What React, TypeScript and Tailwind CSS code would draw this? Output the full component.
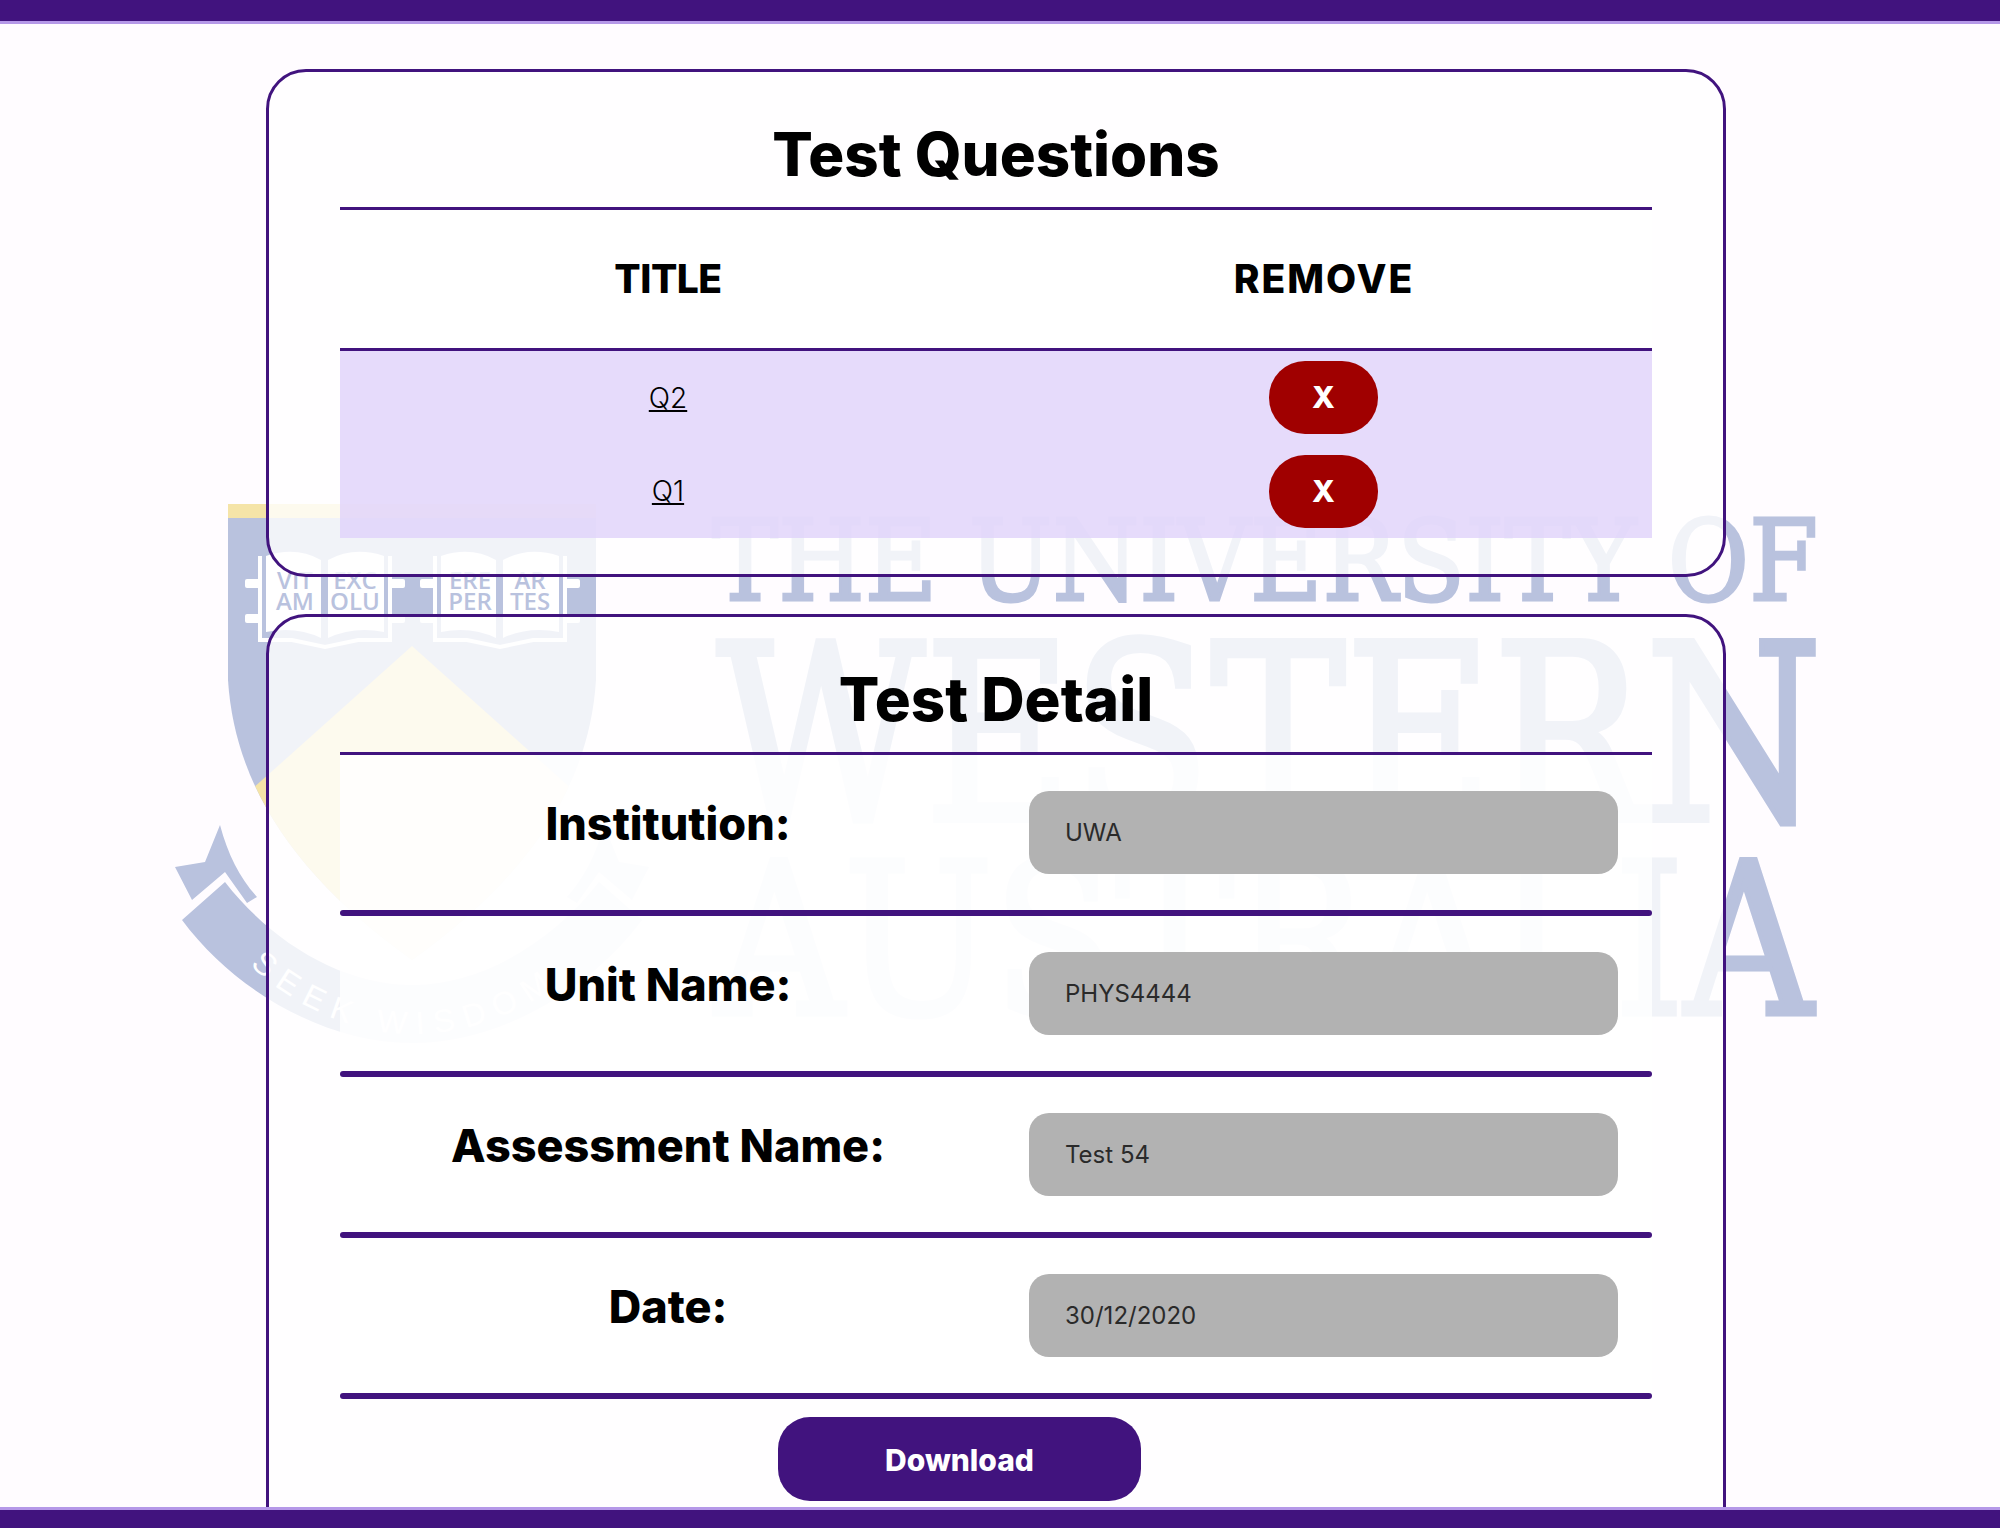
import React from "react";

const blue = "#b9c2de";
const gold = "#f5e4a8";

function Book({ x, l1, l2 }: { x: number; l1: [string, string]; l2: [string, string] }) {
  return (
    <g>
      <path
        d={`M${x + 2} 556 V640 H${x + 34} L${x + 67} 647 L${x + 100} 640 H${x + 132} V556`}
        fill="none"
        stroke="#fff"
        strokeWidth="4"
      />
      <g fill="#fff">
        <rect x={x - 13} y={579} width={15} height={9} rx={2} />
        <rect x={x - 13} y={614} width={15} height={9} rx={2} />
        <rect x={x + 132} y={579} width={15} height={9} rx={2} />
        <rect x={x + 132} y={614} width={15} height={9} rx={2} />
      </g>
      <path d={`M${x + 8} 632 V556 Q${x + 38} 546 ${x + 63} 560 V638 Q${x + 38} 626 ${x + 8} 632 Z`} fill="#fff" />
      <path d={`M${x + 70} 638 V560 Q${x + 96} 546 ${x + 126} 556 V632 Q${x + 96} 626 ${x + 70} 638 Z`} fill="#fff" />
      <g fill={blue} fontFamily="'Open Sans',sans-serif" fontWeight="600" fontSize="24" textAnchor="middle">
        <text x={x + 37} y={589}>{l1[0]}</text>
        <text x={x + 37} y={610}>{l1[1]}</text>
        <text x={x + 97} y={589}>{l2[0]}</text>
        <text x={x + 97} y={610}>{l2[1]}</text>
      </g>
    </g>
  );
}

function Watermark() {
  return (
    <svg className="absolute inset-0" width="2000" height="1528" viewBox="0 0 2000 1528" aria-hidden="true">
      <defs>
        <clipPath id="shield">
          <path d="M228 504H596V680C589 790 524 880 412 960C300 880 235 790 228 680Z" />
        </clipPath>
        <path id="motto" d="M250 965C300 1012 360 1034 412 1034C470 1034 530 1012 580 965" />
      </defs>
      <g clipPath="url(#shield)">
        <rect x="228" y="504" width="368" height="480" fill={blue} />
        <rect x="228" y="504" width="368" height="14" fill={gold} />
        <path d="M412 646L640 850L412 1010L184 850Z" fill={gold} />
      </g>
      <Book x={258} l1={["VIT", "AM"]} l2={["EXC", "OLU"]} />
      <Book x={433} l1={["ERE", "PER"]} l2={["AR", "TES"]} />
      <path d="M175 867L205 862L220 825C228 855 240 878 257 897L247 903L225 872L192 900Z" fill={blue} />
      <path d="M649 867L619 862L604 825C596 855 584 878 567 897L577 903L599 872L632 900Z" fill={blue} />
      <path
        d="M182 920L225 882C270 940 340 985 412 985C484 985 554 940 599 882L642 920C590 990 500 1043 412 1043C324 1043 234 990 182 920Z"
        fill={blue}
      />
      <text fill="#fff" fontFamily="'Liberation Sans',sans-serif" fontSize="32" letterSpacing="10">
        <textPath href="#motto">SEEK WISDOM</textPath>
      </text>
      <g fill={blue} stroke={blue} fontFamily="'DejaVu Serif',serif">
        <text x="712" y="600" fontSize="113" strokeWidth="3" textLength="1106" lengthAdjust="spacingAndGlyphs">THE UNIVERSITY OF</text>
        <text x="717" y="820" fontSize="245" strokeWidth="6" textLength="1105" lengthAdjust="spacingAndGlyphs">WESTERN</text>
        <text x="715" y="1014" fontSize="212" strokeWidth="5" textLength="1098" lengthAdjust="spacingAndGlyphs">AUSTRALIA</text>
      </g>
    </svg>
  );
}

function RemoveRow({ title }: { title: string }) {
  return (
    <div className="grid grid-cols-2 h-[93.5px] items-center bg-[#e0d2fa]/80">
      <a className="justify-self-center text-[28px] font-light underline text-black">{title}</a>
      <button className="justify-self-start ml-[273px] w-[109px] h-[73px] rounded-[36px] bg-[#a00000] text-white text-[30px] font-extrabold">
        X
      </button>
    </div>
  );
}

function DetailRow({ label, value }: { label: string; value: string }) {
  return (
    <>
      <div className="grid grid-cols-2 h-[155px] items-center bg-white/80">
        <div className="text-center text-[45px] font-extrabold text-black pb-[18px]">{label}</div>
        <div className="justify-self-start ml-[33px] w-[589px] h-[83px] rounded-[20px] bg-[#b2b2b2] flex items-center pl-[36px] text-[24px] text-[#2a2a2a]">
          {value}
        </div>
      </div>
      <div className="h-[6px] rounded-full bg-[#41137e]" />
    </>
  );
}

export default function App() {
  return (
    <div className="relative flex flex-col h-[1528px] overflow-hidden bg-[#fffcff] [font-family:Inter,sans-serif]">
      <Watermark />
      <div className="relative z-10 h-[24px] shrink-0 bg-[#41137e] border-b-[3px] border-[#b598e8]" />
      <main className="relative flex-1 overflow-hidden pt-[45px] pl-[266px]">
        <section className="w-[1460px] h-[508px] rounded-[40px] border-[3px] border-[#41137e] bg-white/80 px-[71px]">
          <h2 className="h-[135px] flex items-center justify-center pt-[28px] text-[60px] font-extrabold text-black">
            Test Questions
          </h2>
          <div className="h-[3px] bg-[#41137e]" />
          <div className="grid grid-cols-2 h-[138px] items-center bg-white/80 text-[39px] font-extrabold text-black">
            <div className="text-center tracking-[-0.5px]">TITLE</div>
            <div className="text-center tracking-[2px]">REMOVE</div>
          </div>
          <div className="h-[3px] bg-[#41137e]" />
          <RemoveRow title="Q2" />
          <RemoveRow title="Q1" />
        </section>
        <section className="w-[1460px] h-[1000px] mt-[37px] rounded-[40px] border-[3px] border-[#41137e] bg-white/80 px-[71px]">
          <h2 className="h-[135px] flex items-center justify-center pt-[28px] text-[60px] font-extrabold text-black">
            Test Detail
          </h2>
          <div className="h-[3px] bg-[#41137e]" />
          <DetailRow label="Institution:" value="UWA" />
          <DetailRow label="Unit Name:" value="PHYS4444" />
          <DetailRow label="Assessment Name:" value="Test 54" />
          <DetailRow label="Date:" value="30/12/2020" />
          <button className="block ml-[438px] mt-[18px] w-[363px] h-[84px] rounded-[32px] bg-[#41137e] pt-[2px] text-white text-[30px] font-extrabold">
            Download
          </button>
        </section>
      </main>
      <div className="relative z-10 h-[21px] shrink-0 bg-[#41137e] border-t-[3px] border-[#b598e8]" />
    </div>
  );
}
